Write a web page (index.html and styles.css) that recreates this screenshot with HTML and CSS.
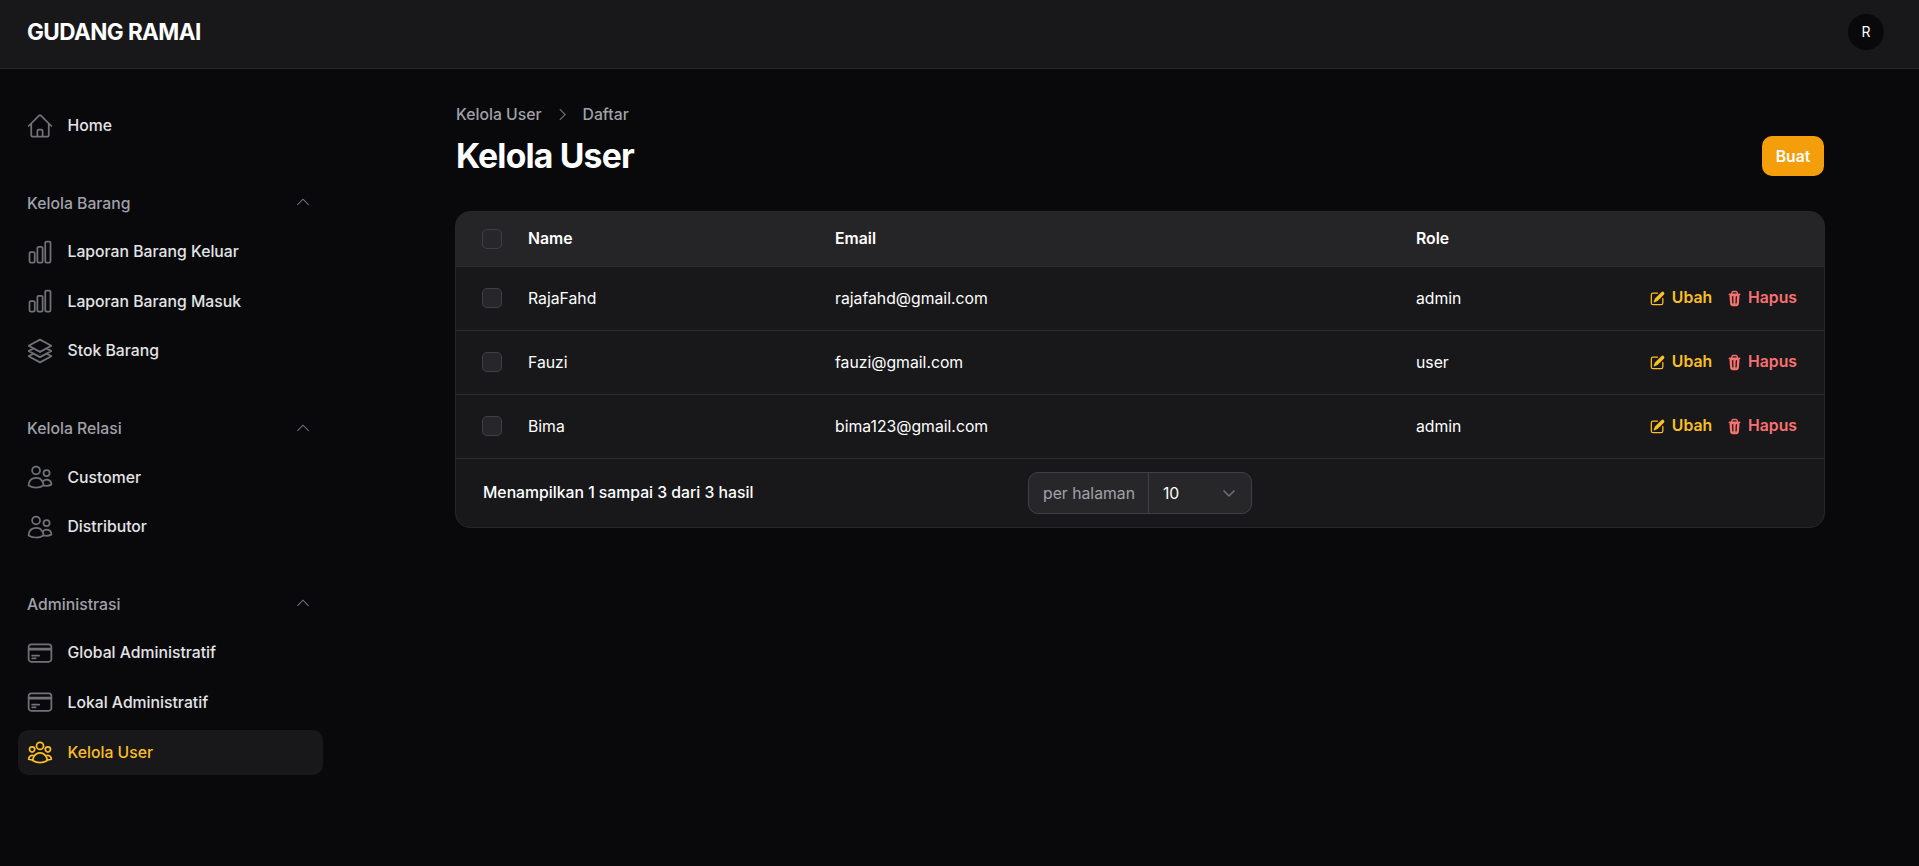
FILE: index.html
```html
<!DOCTYPE html>
<html lang="en">
<head>
    <meta charset="UTF-8">
    <meta name="viewport" content="width=device-width, initial-scale=1.0">
    <title>Kelola User | Gudang Ramai</title>
    <link rel="stylesheet" href="styles.css">
</head>
<body>
    <header class="topbar">
        <span class="brand">GUDANG RAMAI</span>
        <span class="avatar">R</span>
    </header>
    <div class="layout">
        <aside class="sidebar">
            <section class="nav-group">
                <a class="nav-item">
                    <svg class="nav-icon" viewBox="0 0 24 24"><path d="M2.25 12l8.954-8.955c.44-.439 1.152-.439 1.591 0L21.75 12M4.5 9.75v10.125c0 .621.504 1.125 1.125 1.125H9.75v-4.875c0-.621.504-1.125 1.125-1.125h2.25c.621 0 1.125.504 1.125 1.125V21h4.125c.621 0 1.125-.504 1.125-1.125V9.75M8.25 21h8.25"/></svg>
                    <span>Home</span>
                </a>
            </section>
            <section class="nav-group">
                <div class="nav-label">
                    <span>Kelola Barang</span>
                    <svg class="chevron" viewBox="0 0 24 24"><path d="M4.5 15.75l7.5-7.5 7.5 7.5"/></svg>
                </div>
                <a class="nav-item">
                    <svg class="nav-icon" viewBox="0 0 24 24"><path d="M3 13.125C3 12.504 3.504 12 4.125 12h2.25c.621 0 1.125.504 1.125 1.125v6.75C7.5 20.496 6.996 21 6.375 21h-2.25A1.125 1.125 0 013 19.875v-6.75zM9.75 8.625c0-.621.504-1.125 1.125-1.125h2.25c.621 0 1.125.504 1.125 1.125v11.25c0 .621-.504 1.125-1.125 1.125h-2.25a1.125 1.125 0 01-1.125-1.125V8.625zM16.5 4.125c0-.621.504-1.125 1.125-1.125h2.25C20.496 3 21 3.504 21 4.125v15.75c0 .621-.504 1.125-1.125 1.125h-2.25a1.125 1.125 0 01-1.125-1.125V4.125z"/></svg>
                    <span>Laporan Barang Keluar</span>
                </a>
                <a class="nav-item">
                    <svg class="nav-icon" viewBox="0 0 24 24"><path d="M3 13.125C3 12.504 3.504 12 4.125 12h2.25c.621 0 1.125.504 1.125 1.125v6.75C7.5 20.496 6.996 21 6.375 21h-2.25A1.125 1.125 0 013 19.875v-6.75zM9.75 8.625c0-.621.504-1.125 1.125-1.125h2.25c.621 0 1.125.504 1.125 1.125v11.25c0 .621-.504 1.125-1.125 1.125h-2.25a1.125 1.125 0 01-1.125-1.125V8.625zM16.5 4.125c0-.621.504-1.125 1.125-1.125h2.25C20.496 3 21 3.504 21 4.125v15.75c0 .621-.504 1.125-1.125 1.125h-2.25a1.125 1.125 0 01-1.125-1.125V4.125z"/></svg>
                    <span>Laporan Barang Masuk</span>
                </a>
                <a class="nav-item">
                    <svg class="nav-icon" viewBox="0 0 24 24"><path d="M6.429 9.75L2.25 12l4.179 2.25m0-4.5l5.571 3 5.571-3m-11.142 0L2.25 7.5 12 2.25l9.75 5.25-4.179 2.25m0 0L21.75 12l-4.179 2.25m0 0l4.179 2.25L12 21.75 2.25 16.5l4.179-2.25m11.142 0l-5.571 3-5.571-3"/></svg>
                    <span>Stok Barang</span>
                </a>
            </section>
            <section class="nav-group">
                <div class="nav-label">
                    <span>Kelola Relasi</span>
                    <svg class="chevron" viewBox="0 0 24 24"><path d="M4.5 15.75l7.5-7.5 7.5 7.5"/></svg>
                </div>
                <a class="nav-item">
                    <svg class="nav-icon" viewBox="0 0 24 24"><path d="M15 19.128a9.38 9.38 0 002.625.372 9.337 9.337 0 004.121-.952 4.125 4.125 0 00-7.533-2.493M15 19.128v-.003c0-1.113-.285-2.16-.786-3.07M15 19.128v.106A12.318 12.318 0 018.624 21c-2.331 0-4.512-.645-6.374-1.766l-.001-.109a6.375 6.375 0 0111.964-3.07M12 6.375a3.375 3.375 0 11-6.75 0 3.375 3.375 0 016.75 0zm8.25 2.25a2.625 2.625 0 11-5.25 0 2.625 2.625 0 015.25 0z"/></svg>
                    <span>Customer</span>
                </a>
                <a class="nav-item">
                    <svg class="nav-icon" viewBox="0 0 24 24"><path d="M15 19.128a9.38 9.38 0 002.625.372 9.337 9.337 0 004.121-.952 4.125 4.125 0 00-7.533-2.493M15 19.128v-.003c0-1.113-.285-2.16-.786-3.07M15 19.128v.106A12.318 12.318 0 018.624 21c-2.331 0-4.512-.645-6.374-1.766l-.001-.109a6.375 6.375 0 0111.964-3.07M12 6.375a3.375 3.375 0 11-6.75 0 3.375 3.375 0 016.75 0zm8.25 2.25a2.625 2.625 0 11-5.25 0 2.625 2.625 0 015.25 0z"/></svg>
                    <span>Distributor</span>
                </a>
            </section>
            <section class="nav-group">
                <div class="nav-label">
                    <span>Administrasi</span>
                    <svg class="chevron" viewBox="0 0 24 24"><path d="M4.5 15.75l7.5-7.5 7.5 7.5"/></svg>
                </div>
                <a class="nav-item">
                    <svg class="nav-icon" viewBox="0 0 24 24"><path d="M2.25 8.25h19.5M2.25 9h19.5m-16.5 5.25h6m-6 2.25h3m-3.75 3h15a2.25 2.25 0 002.25-2.25V6.75A2.25 2.25 0 0019.5 4.5h-15a2.25 2.25 0 00-2.25 2.25v10.5A2.25 2.25 0 004.5 19.5z"/></svg>
                    <span>Global Administratif</span>
                </a>
                <a class="nav-item">
                    <svg class="nav-icon" viewBox="0 0 24 24"><path d="M2.25 8.25h19.5M2.25 9h19.5m-16.5 5.25h6m-6 2.25h3m-3.75 3h15a2.25 2.25 0 002.25-2.25V6.75A2.25 2.25 0 0019.5 4.5h-15a2.25 2.25 0 00-2.25 2.25v10.5A2.25 2.25 0 004.5 19.5z"/></svg>
                    <span>Lokal Administratif</span>
                </a>
                <a class="nav-item active">
                    <svg class="nav-icon" viewBox="0 0 24 24"><path d="M18 18.72a9.094 9.094 0 003.741-.479 3 3 0 00-4.682-2.72m.94 3.198l.001.031c0 .225-.012.447-.037.666A11.944 11.944 0 0112 21c-2.17 0-4.207-.576-5.963-1.584A6.062 6.062 0 016 18.719m12 0a5.971 5.971 0 00-.941-3.197m0 0A5.995 5.995 0 0012 12.75a5.995 5.995 0 00-5.058 2.772m0 0a3 3 0 00-4.681 2.72 8.986 8.986 0 003.74.477m.94-3.197a5.971 5.971 0 00-.94 3.197M15 6.75a3 3 0 11-6 0 3 3 0 016 0zm6 3a2.25 2.25 0 11-4.5 0 2.25 2.25 0 014.5 0zm-13.5 0a2.25 2.25 0 11-4.5 0 2.25 2.25 0 014.5 0z"/></svg>
                    <span>Kelola User</span>
                </a>
            </section>
        </aside>

        <main class="content">
            <nav class="breadcrumb">
                <span>Kelola User</span>
                <svg class="crumb-sep" viewBox="0 0 24 24"><path d="M8.25 4.5l7.5 7.5-7.5 7.5"/></svg>
                <span>Daftar</span>
            </nav>
            <div class="page-head">
                <h1>Kelola User</h1>
                <button class="btn-create">Buat</button>
            </div>

            <div class="card">
                <table class="users">
                    <colgroup>
                        <col class="col-check">
                        <col class="col-name">
                        <col class="col-email">
                        <col class="col-role">
                        <col>
                    </colgroup>
                    <thead>
                        <tr>
                            <th><span class="check"></span></th>
                            <th>Name</th>
                            <th>Email</th>
                            <th>Role</th>
                            <th></th>
                        </tr>
                    </thead>
                    <tbody>
                        <tr>
                            <td><span class="check"></span></td>
                            <td>RajaFahd</td>
                            <td>rajafahd@gmail.com</td>
                            <td>admin</td>
                            <td>
                                <div class="actions">
                                    <a class="action edit">
                                        <svg viewBox="0 0 20 20"><path d="M5.433 13.917l1.262-3.155A4 4 0 017.58 9.42l6.92-6.918a2.121 2.121 0 013 3l-6.92 6.918c-.383.383-.84.685-1.343.886l-3.154 1.262a.5.5 0 01-.65-.65z"/><path d="M3.5 5.75c0-.69.56-1.25 1.25-1.25H10A.75.75 0 0010 3H4.75A2.75 2.75 0 002 5.75v9.5A2.75 2.75 0 004.75 18h9.5A2.75 2.75 0 0017 15.25V10a.75.75 0 00-1.5 0v5.25c0 .69-.56 1.25-1.25 1.25h-9.5c-.69 0-1.25-.56-1.25-1.25v-9.5z"/></svg>
                                        Ubah
                                    </a>
                                    <a class="action delete">
                                        <svg viewBox="0 0 20 20"><path fill-rule="evenodd" d="M8.75 1A2.75 2.75 0 006 3.75v.443c-.795.077-1.584.176-2.365.298a.75.75 0 10.23 1.482l.149-.022.841 10.518A2.75 2.75 0 007.596 19h4.807a2.75 2.75 0 002.742-2.53l.841-10.52.149.023a.75.75 0 00.23-1.482A41.03 41.03 0 0014 4.193V3.75A2.75 2.75 0 0011.25 1h-2.5zM10 4c.84 0 1.673.025 2.5.075V3.75c0-.69-.56-1.25-1.25-1.25h-2.5c-.69 0-1.25.56-1.25 1.25v.325C8.327 4.025 9.16 4 10 4zM8.58 7.72a.75.75 0 00-1.5.06l.3 7.5a.75.75 0 101.5-.06l-.3-7.5zm4.34.06a.75.75 0 10-1.5-.06l-.3 7.5a.75.75 0 101.5.06l.3-7.5z"/></svg>
                                        Hapus
                                    </a>
                                </div>
                            </td>
                        </tr>
                        <tr>
                            <td><span class="check"></span></td>
                            <td>Fauzi</td>
                            <td>fauzi@gmail.com</td>
                            <td>user</td>
                            <td>
                                <div class="actions">
                                    <a class="action edit">
                                        <svg viewBox="0 0 20 20"><path d="M5.433 13.917l1.262-3.155A4 4 0 017.58 9.42l6.92-6.918a2.121 2.121 0 013 3l-6.92 6.918c-.383.383-.84.685-1.343.886l-3.154 1.262a.5.5 0 01-.65-.65z"/><path d="M3.5 5.75c0-.69.56-1.25 1.25-1.25H10A.75.75 0 0010 3H4.75A2.75 2.75 0 002 5.75v9.5A2.75 2.75 0 004.75 18h9.5A2.75 2.75 0 0017 15.25V10a.75.75 0 00-1.5 0v5.25c0 .69-.56 1.25-1.25 1.25h-9.5c-.69 0-1.25-.56-1.25-1.25v-9.5z"/></svg>
                                        Ubah
                                    </a>
                                    <a class="action delete">
                                        <svg viewBox="0 0 20 20"><path fill-rule="evenodd" d="M8.75 1A2.75 2.75 0 006 3.75v.443c-.795.077-1.584.176-2.365.298a.75.75 0 10.23 1.482l.149-.022.841 10.518A2.75 2.75 0 007.596 19h4.807a2.75 2.75 0 002.742-2.53l.841-10.52.149.023a.75.75 0 00.23-1.482A41.03 41.03 0 0014 4.193V3.75A2.75 2.75 0 0011.25 1h-2.5zM10 4c.84 0 1.673.025 2.5.075V3.75c0-.69-.56-1.25-1.25-1.25h-2.5c-.69 0-1.25.56-1.25 1.25v.325C8.327 4.025 9.16 4 10 4zM8.58 7.72a.75.75 0 00-1.5.06l.3 7.5a.75.75 0 101.5-.06l-.3-7.5zm4.34.06a.75.75 0 10-1.5-.06l-.3 7.5a.75.75 0 101.5.06l.3-7.5z"/></svg>
                                        Hapus
                                    </a>
                                </div>
                            </td>
                        </tr>
                        <tr>
                            <td><span class="check"></span></td>
                            <td>Bima</td>
                            <td>bima123@gmail.com</td>
                            <td>admin</td>
                            <td>
                                <div class="actions">
                                    <a class="action edit">
                                        <svg viewBox="0 0 20 20"><path d="M5.433 13.917l1.262-3.155A4 4 0 017.58 9.42l6.92-6.918a2.121 2.121 0 013 3l-6.92 6.918c-.383.383-.84.685-1.343.886l-3.154 1.262a.5.5 0 01-.65-.65z"/><path d="M3.5 5.75c0-.69.56-1.25 1.25-1.25H10A.75.75 0 0010 3H4.75A2.75 2.75 0 002 5.75v9.5A2.75 2.75 0 004.75 18h9.5A2.75 2.75 0 0017 15.25V10a.75.75 0 00-1.5 0v5.25c0 .69-.56 1.25-1.25 1.25h-9.5c-.69 0-1.25-.56-1.25-1.25v-9.5z"/></svg>
                                        Ubah
                                    </a>
                                    <a class="action delete">
                                        <svg viewBox="0 0 20 20"><path fill-rule="evenodd" d="M8.75 1A2.75 2.75 0 006 3.75v.443c-.795.077-1.584.176-2.365.298a.75.75 0 10.23 1.482l.149-.022.841 10.518A2.75 2.75 0 007.596 19h4.807a2.75 2.75 0 002.742-2.53l.841-10.52.149.023a.75.75 0 00.23-1.482A41.03 41.03 0 0014 4.193V3.75A2.75 2.75 0 0011.25 1h-2.5zM10 4c.84 0 1.673.025 2.5.075V3.75c0-.69-.56-1.25-1.25-1.25h-2.5c-.69 0-1.25.56-1.25 1.25v.325C8.327 4.025 9.16 4 10 4zM8.58 7.72a.75.75 0 00-1.5.06l.3 7.5a.75.75 0 101.5-.06l-.3-7.5zm4.34.06a.75.75 0 10-1.5-.06l-.3 7.5a.75.75 0 101.5.06l.3-7.5z"/></svg>
                                        Hapus
                                    </a>
                                </div>
                            </td>
                        </tr>
                    </tbody>
                </table>
                <div class="table-footer">
                    <span class="result-count">Menampilkan 1 sampai 3 dari 3 hasil</span>
                    <div class="per-page">
                        <span class="per-page-label">per halaman</span>
                        <div class="per-page-select">
                            <span>10</span>
                            <svg viewBox="0 0 20 20"><path d="M4.5 7.5l5.5 5.5 5.5-5.5"/></svg>
                        </div>
                    </div>
                </div>
            </div>
        </main>
    </div>
</body>
</html>
```
FILE: styles.css
```css
* {
    box-sizing: border-box;
}

body {
    margin: 0;
    height: 866px;
    overflow: hidden;
    background-color: #09090b;
    color: #fff;
    font-family: Inter, "Noto Sans", sans-serif;
    font-size: 15.75px;
}

.topbar {
    display: flex;
    justify-content: space-between;
    align-items: center;
    height: 69px;
    padding: 0 35px 5px 27px;
    background-color: #18181b;
    border-bottom: 1px solid #27272a;
}

.brand {
    font-size: 22.5px;
    font-weight: 700;
    letter-spacing: -0.56px;
}

.avatar {
    display: flex;
    justify-content: center;
    align-items: center;
    width: 36px;
    height: 36px;
    border-radius: 50%;
    background-color: #09090b;
    font-size: 14px;
}

.layout {
    display: flex;
}

/* sidebar */
.sidebar {
    display: flex;
    flex-direction: column;
    gap: 41.25px;
    width: 340px;
    flex-shrink: 0;
    padding: 34px 17px 0 18px;
}

.nav-group {
    display: flex;
    flex-direction: column;
    gap: 4.5px;
}

.nav-label {
    display: flex;
    justify-content: space-between;
    align-items: center;
    height: 28px;
    margin-bottom: 7.5px;
    padding: 0 11px 0 9px;
    color: #a1a1aa;
    font-weight: 500;
}

.chevron {
    width: 18px;
    height: 18px;
    margin-bottom: 2px;
    fill: none;
    stroke: #71717a;
    stroke-width: 1.5;
}

.nav-item {
    display: flex;
    align-items: center;
    gap: 13.5px;
    height: 45px;
    padding: 0 8px;
    border-radius: 10px;
    color: #e4e4e7;
    font-weight: 500;
}

.nav-icon {
    width: 28px;
    height: 28px;
    flex-shrink: 0;
    fill: none;
    stroke: #71717a;
    stroke-width: 1.5;
    stroke-linecap: round;
    stroke-linejoin: round;
}

.nav-item.active {
    margin-top: 1px;
    padding-bottom: 1px;
    background-color: #18181b;
    color: #fbbf24;
}

.nav-item.active .nav-icon {
    stroke: #fbbf24;
}

/* main column */
.content {
    flex: 1;
    padding: 34px 94px 0 115px;
}

.breadcrumb {
    display: flex;
    align-items: center;
    gap: 12px;
    height: 22px;
    padding-left: 1px;
    color: #a1a1aa;
    font-weight: 500;
}

.crumb-sep {
    width: 17px;
    height: 17px;
    fill: none;
    stroke: #71717a;
    stroke-width: 1.5;
}

.page-head {
    display: flex;
    justify-content: space-between;
    align-items: center;
    margin-top: 10px;
    padding: 0 1px;
}

h1 {
    margin: 0;
    font-size: 33.75px;
    font-weight: 700;
    letter-spacing: -0.84px;
    line-height: 42px;
}

.btn-create {
    width: 62px;
    height: 40px;
    border: none;
    border-radius: 10px;
    background-color: #f59e0b;
    color: #fff;
    font-family: inherit;
    font-size: 15.75px;
    font-weight: 600;
}

.card {
    margin-top: 34px;
    border: 1px solid #27272a;
    border-radius: 15px;
    background-color: #18181b;
    overflow: hidden;
}

.users {
    width: 100%;
    border-collapse: collapse;
    table-layout: fixed;
}

.col-check {
    width: 72px;
}

.col-name {
    width: 307px;
}

.col-email {
    width: 581px;
}

.col-role {
    width: 230px;
}

.users th {
    height: 54px;
    padding: 0;
    background-color: #252528;
    text-align: left;
    font-weight: 600;
}

.users td {
    height: 64px;
    padding: 0;
    border-top: 1px solid #2c2c2f;
}

.check {
    display: block;
    width: 20px;
    height: 20px;
    margin-left: 26px;
    border: 1px solid #3f3f46;
    border-radius: 5px;
    background-color: #27272a;
}

.actions {
    display: flex;
    justify-content: flex-end;
    gap: 14px;
    padding-right: 27px;
}

.action {
    display: flex;
    align-items: center;
    gap: 5px;
    margin-top: -1px;
    font-weight: 600;
}

.action svg {
    width: 17px;
    height: 17px;
    margin-top: 2px;
    fill: currentColor;
}

.edit {
    gap: 6px;
    color: #fbbf24;
}

.delete {
    color: #f87171;
}

.table-footer {
    display: flex;
    align-items: center;
    height: 69px;
    padding: 0 27px;
    border-top: 1px solid #2c2c2f;
}

.result-count {
    width: 545px;
    flex-shrink: 0;
    padding-bottom: 2px;
    font-weight: 500;
}

.per-page {
    display: flex;
    align-items: stretch;
    width: 224px;
    height: 42px;
    border: 1px solid #3f3f46;
    border-radius: 10px;
    background-color: #27272a;
    overflow: hidden;
}

.per-page-label {
    display: flex;
    align-items: center;
    padding: 0 13px 0 14px;
    border-right: 1px solid #3f3f46;
    color: #a1a1aa;
}

.per-page-select {
    display: flex;
    flex: 1;
    justify-content: space-between;
    align-items: center;
    padding: 0 12px 0 14px;
}

.per-page-select svg {
    width: 20px;
    height: 20px;
    fill: none;
    stroke: #71717a;
    stroke-width: 1.5;
}
```
